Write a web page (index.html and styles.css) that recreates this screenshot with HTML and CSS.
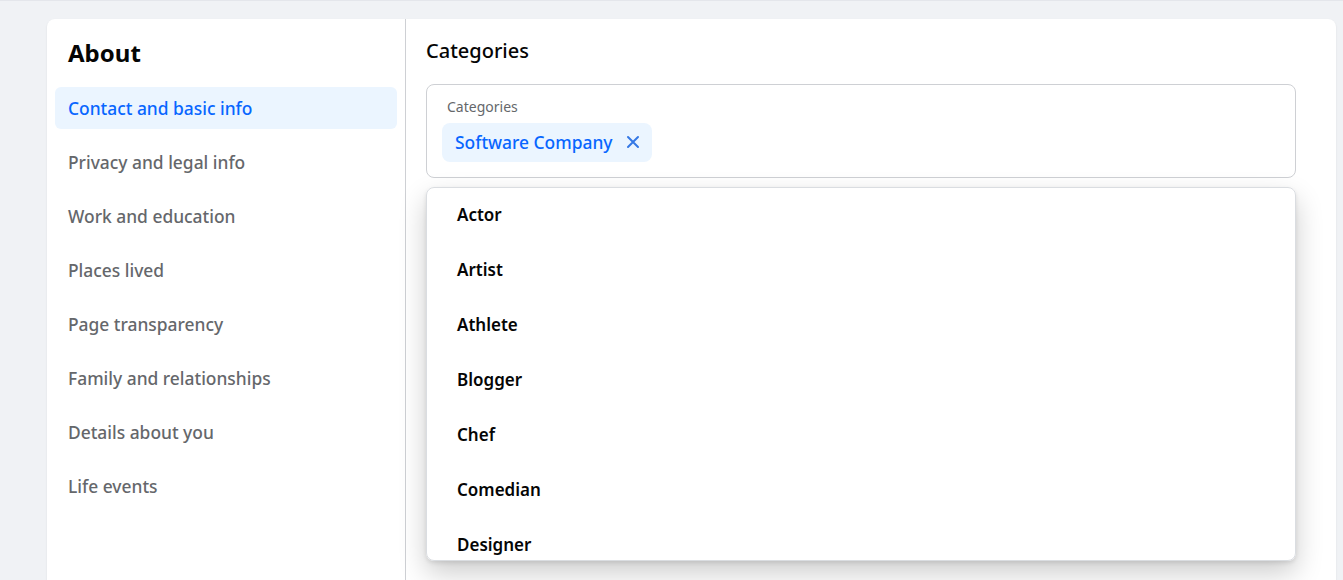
FILE: index.html
```html
<!DOCTYPE html>
<html lang="en">
<head>
    <meta charset="UTF-8">
    <title>About - Categories</title>
    <link rel="stylesheet" href="styles.css">
</head>
<body>
    <div class="card">
        <aside class="sidebar">
            <h1 class="sidebar-title">About</h1>
            <nav class="nav">
                <a class="nav-item active">Contact and basic info</a>
                <a class="nav-item">Privacy and legal info</a>
                <a class="nav-item">Work and education</a>
                <a class="nav-item">Places lived</a>
                <a class="nav-item">Page transparency</a>
                <a class="nav-item">Family and relationships</a>
                <a class="nav-item">Details about you</a>
                <a class="nav-item">Life events</a>
            </nav>
        </aside>
        <main class="content">
            <h2 class="section-title">Categories</h2>
            <div class="field">
                <div class="field-label">Categories</div>
                <div class="chips">
                    <span class="chip">
                        Software Company
                        <svg class="chip-x" width="14" height="14" viewBox="0 0 14 14">
                            <path d="M2 2L12 12M12 2L2 12" stroke="currentColor" stroke-width="2" stroke-linecap="round"/>
                        </svg>
                    </span>
                </div>
            </div>
            <ul class="dropdown">
                <li class="option">Actor</li>
                <li class="option">Artist</li>
                <li class="option">Athlete</li>
                <li class="option">Blogger</li>
                <li class="option">Chef</li>
                <li class="option">Comedian</li>
                <li class="option">Designer</li>
            </ul>
        </main>
    </div>
</body>
</html>
```

FILE: styles.css
```css
* {
    margin: 0;
    padding: 0;
    box-sizing: border-box;
}
body {
    background: #f0f2f5;
    border-top: 1px solid #e4e6eb;
    font-family: 'Noto Sans', 'Liberation Sans', sans-serif;
    color: #050505;
    padding: 18px 7px 0 47px;
    height: 580px;
    overflow: hidden;
}
.card {
    display: flex;
    background: #fff;
    border-radius: 8px 8px 0 0;
    height: 100%;
    box-shadow: 0 1px 2px rgba(0,0,0,0.1);
}
.sidebar {
    width: 359px;
    flex-shrink: 0;
    border-right: 1px solid #ced0d4;
    padding: 20px 8px 0;
}
.sidebar-title {
    font-size: 24px;
    line-height: 28px;
    font-weight: 700;
    padding-left: 13px;
    margin-bottom: 20px;
}
.nav {
    display: flex;
    flex-direction: column;
    gap: 12px;
}
.nav-item {
    display: flex;
    align-items: center;
    height: 42px;
    padding: 0 0 1px 13px;
    border-radius: 6px;
    font-size: 17.4px;
    font-weight: 500;
    color: #65676b;
}
.nav-item.active {
    background: #ebf5ff;
    color: #0866ff;
}
.content {
    flex: 1;
    padding: 20px 40px 0 20px;
}
.section-title {
    font-size: 20px;
    line-height: 24px;
    font-weight: 500;
    margin-bottom: 21px;
}
.field {
    border: 1px solid #ced0d4;
    border-radius: 8px;
    padding: 13px 15px 15px;
    height: 94px;
}
.field-label {
    font-size: 14px;
    line-height: 18px;
    color: #65676b;
    padding-left: 5px;
    margin-bottom: 7px;
}
.chips {
    display: flex;
}
.chip {
    display: flex;
    align-items: center;
    gap: 13px;
    height: 39px;
    padding: 0 12px 1px 13px;
    background: #ebf5ff;
    border-radius: 8px;
    font-size: 17.4px;
    font-weight: 500;
    color: #0866ff;
}
.chip-x {
    color: #3578e5;
}
.dropdown {
    list-style: none;
    margin-top: 9px;
    height: 374px;
    overflow: hidden;
    border: 1px solid #dadde1;
    border-radius: 8px;
    box-shadow: 0 12px 28px rgba(0,0,0,0.2), 0 2px 4px rgba(0,0,0,0.1);
}
.option {
    display: flex;
    align-items: center;
    height: 55px;
    padding: 0 0 2px 30px;
    font-size: 17px;
    font-weight: 600;
    color: #050505;
}
```
